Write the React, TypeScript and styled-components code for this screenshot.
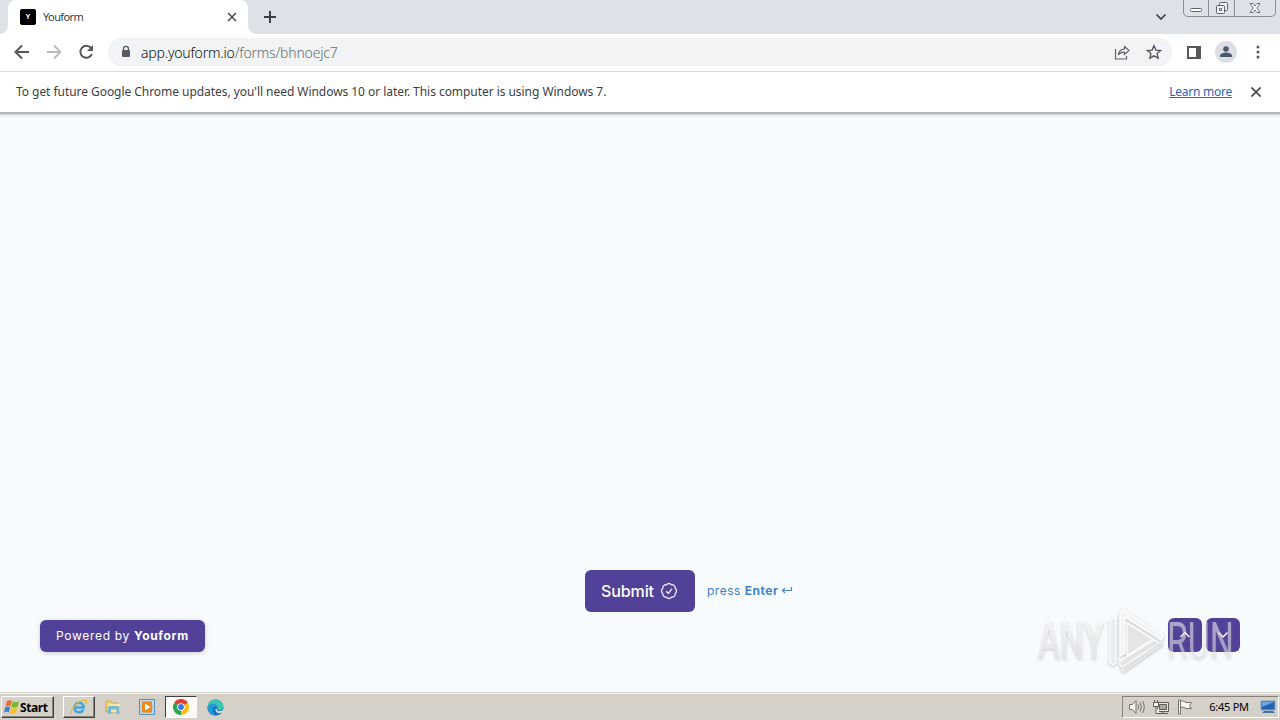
import styled, { createGlobalStyle, css } from "styled-components";

const GlobalStyle = createGlobalStyle`
  * {
    box-sizing: border-box;
  }

  body {
    margin: 0;
    overflow: hidden;
  }

  svg {
    display: block;
    flex: none;
  }
`;

const Screen = styled.div`
  position: relative;
  display: flex;
  flex-direction: column;
  width: 1280px;
  height: 720px;
  overflow: hidden;
  background: #f8fbfe;
  color: #3c4043;
  font-family: "Noto Sans", "Open Sans", sans-serif;
`;

const TabStrip = styled.header`
  display: flex;
  height: 34px;
  flex: none;
  padding-left: 8px;
  background: #dde1e8;
`;

const Tab = styled.div`
  position: relative;
  display: flex;
  align-items: center;
  width: 240px;
  padding: 0 10px 0 12px;
  border-radius: 8px 8px 0 0;
  background: #fff;

  &::before,
  &::after {
    content: "";
    position: absolute;
    bottom: 0;
    width: 8px;
    height: 8px;
  }

  &::before {
    left: -8px;
    background: radial-gradient(circle at 0 0, transparent 7.5px, #fff 8px);
  }

  &::after {
    right: -8px;
    background: radial-gradient(circle at 100% 0, transparent 7.5px, #fff 8px);
  }
`;

const Favicon = styled.span`
  width: 16px;
  height: 16px;
  border-radius: 2px;
  background: #000;
  color: #fff;
  font: bold 7px/16px Roboto, sans-serif;
  text-align: center;
`;

const TabTitle = styled.span`
  flex: 1;
  margin-left: 7px;
  padding-bottom: 2px;
  font-size: 11px;
  letter-spacing: -0.6px;
`;

const NewTab = styled.div`
  display: flex;
  align-items: center;
  margin-left: 15px;
`;

const TabSearch = styled.div`
  display: flex;
  align-items: center;
  margin-left: auto;
`;

const WindowControls = styled.div`
  display: flex;
  height: 17px;
  margin: 0 4px 0 16px;
  border: 1px solid #8b8f98;
  border-top: 0;
  border-radius: 0 0 5px 5px;
`;

const WindowButton = styled.div<{ $width: number }>`
  display: flex;
  align-items: center;
  justify-content: center;
  width: ${({ $width }) => $width}px;

  & + & {
    border-left: 1px solid #8b8f98;
  }
`;

const Toolbar = styled.nav`
  display: flex;
  align-items: center;
  height: 38px;
  flex: none;
  padding: 0 12px 1px;
  border-bottom: 1px solid #d9dbde;
  background: #fff;
`;

const NavIcons = styled.div`
  display: flex;
  gap: 12px;
`;

const AddressBar = styled.div`
  display: flex;
  align-items: center;
  width: 1064px;
  height: 28px;
  margin-left: 12px;
  padding: 0 8px;
  border-radius: 14px;
  background: #f1f3f5;
`;

const Url = styled.span`
  flex: 1;
  margin-left: 5px;
  color: #686c70;
  font-size: 14px;
  font-weight: 300;
  letter-spacing: -0.2px;
`;

const Host = styled.span`
  color: #101113;
`;

const AddressActions = styled.div`
  display: flex;
  gap: 12px;
`;

const ToolbarActions = styled.div`
  display: flex;
  align-items: center;
  gap: 11px;
  margin-left: 12px;
`;

const Avatar = styled.span`
  width: 22px;
  height: 22px;
  overflow: hidden;
  border-radius: 50%;
  background: #dcdfe4;
`;

const InfoBar = styled.section`
  position: relative;
  display: flex;
  align-items: center;
  height: 40px;
  flex: none;
  padding: 0 19px 0 16px;
  background: #fff;
  box-shadow: 0 1px 0 #b4b9bc, 0 2px 0 #b4b9bc, 0 3px 1px #d0d5d8, 0 4px 3px #e2e6e9;
  font-size: 12px;
`;

const InfoText = styled.p`
  flex: 1;
  margin: 0;
  padding-bottom: 1px;
  letter-spacing: -0.05px;
`;

const LearnMore = styled.a`
  margin-right: 19px;
  padding-bottom: 1px;
  color: #2b63b8;
  letter-spacing: -0.25px;
  text-decoration: underline;
`;

const FormPage = styled.main`
  display: flex;
  flex: 1;
  flex-direction: column;
  justify-content: flex-end;
  padding-bottom: 40px;
  font-family: Inter, sans-serif;
`;

const SubmitRow = styled.div`
  display: flex;
  align-items: center;
  gap: 12px;
  margin-bottom: 6px;
  padding-left: 585px;
`;

const SubmitButton = styled.button`
  display: flex;
  align-items: center;
  justify-content: center;
  gap: 5px;
  width: 110px;
  height: 42px;
  padding: 0;
  border: 0;
  border-radius: 6px;
  background: #524199;
  color: #fff;
  font: 500 16px Inter, sans-serif;
  letter-spacing: -0.1px;
`;

const EnterHint = styled.span`
  display: flex;
  align-items: center;
  padding-bottom: 2px;
  color: #4380cc;
  font-size: 12px;
  letter-spacing: 0.5px;
  white-space: pre;

  strong {
    margin-right: 3px;
    font-weight: 700;
  }
`;

const FormFooter = styled.footer`
  display: flex;
  align-items: flex-end;
  justify-content: space-between;
  padding: 0 40px;
`;

const PoweredBy = styled.div`
  width: 165px;
  height: 32px;
  border-radius: 6px;
  background: #524199;
  box-shadow: 0 1px 4px rgba(0, 0, 0, 0.2);
  color: #fff;
  font-size: 12px;
  letter-spacing: 0.68px;
  line-height: 32px;
  text-align: center;
`;

const StepButtons = styled.div`
  display: flex;
  gap: 4px;
`;

const StepButton = styled.button`
  display: flex;
  align-items: center;
  justify-content: center;
  width: 34px;
  height: 34px;
  padding: 0;
  border: 0;
  border-radius: 6px;
  background: #524199;
`;

const Watermark = styled.svg`
  position: absolute;
  top: 600px;
  left: 1030px;
`;

const Taskbar = styled.footer`
  display: flex;
  align-items: center;
  height: 28px;
  flex: none;
  padding: 2px 0 1px 1px;
  border-top: 1px solid #d3d2ca;
  background: #d5d0c8;
  box-shadow: inset 0 1px 0 #f9f8f5;
`;

const raised = css`
  border: 1px solid;
  border-color: #fff #404040 #404040 #fff;
  box-shadow: inset -1px -1px 0 #87837c;
`;

const sunken = css`
  border: 1px solid;
  border-color: #404040 #fff #fff #404040;
  background: #fbfaf8;
`;

const StartButton = styled.button`
  display: flex;
  align-items: center;
  gap: 0;
  width: 53px;
  height: 22px;
  margin-right: 9px;
  padding: 0 2px;
  background: #d5d0c8;
  color: #000;
  font: bold 12px "Noto Sans", sans-serif;
  letter-spacing: -0.4px;
  ${raised}
`;

const TaskButton = styled.div<{ $state?: "raised" | "sunken" }>`
  display: flex;
  align-items: center;
  justify-content: center;
  width: 32px;
  height: 22px;
  margin-right: 2px;
  ${({ $state }) => $state === "raised" && raised}
  ${({ $state }) => $state === "sunken" && sunken}
`;

const Tray = styled.div`
  display: flex;
  align-items: center;
  width: 157px;
  height: 22px;
  margin: 0 1px 0 auto;
  padding: 0 1px 0 5px;
  border: 1px solid;
  border-color: #87837c #fff #fff #87837c;
`;

const TrayIcons = styled.div`
  display: flex;
  gap: 6px;
`;

const Clock = styled.span`
  flex: 1;
  padding: 0 0 1px 5px;
  color: #000;
  font-size: 11px;
  letter-spacing: -0.25px;
  text-align: center;
`;

const CrossIcon = ({ size = 10 }: { size?: number }) => (
  <svg width={size} height={size} viewBox="0 0 10 10" stroke="#45494d" strokeWidth="1.7">
    <path d="M.5.5l9 9M9.5.5l-9 9" />
  </svg>
);

const BackIcon = () => (
  <svg width="20" height="20" viewBox="0 0 20 20" fill="none" stroke="#55585c" strokeWidth="2">
    <path d="M17 10H4M10 3.5L3.5 10l6.5 6.5" />
  </svg>
);

const ForwardIcon = () => (
  <svg width="20" height="20" viewBox="0 0 20 20" fill="none" stroke="#b8babd" strokeWidth="1.8">
    <path d="M3 10h13M10 3.5l6.5 6.5-6.5 6.5" />
  </svg>
);

const ReloadIcon = () => (
  <svg width="20" height="20" viewBox="0 0 20 20">
    <path d="M15 6a6 6 0 1 0 .9 6.2" fill="none" stroke="#55585c" strokeWidth="2" />
    <path d="M17 3v6h-6z" fill="#55585c" />
  </svg>
);

const LockIcon = () => (
  <svg width="20" height="20" viewBox="0 0 20 20">
    <path d="M7.500 9V6.800a2.500 2.500 0 0 1 5 0V9" fill="none" stroke="#55585c" strokeWidth="1.300" />
    <rect x="6" y="8" width="8" height="7" rx="1" fill="#55585c" />
  </svg>
);

const ShareIcon = () => (
  <svg width="20" height="20" viewBox="0 0 20 20" fill="none" stroke="#606468" strokeWidth="1.200">
    <path d="M3.500 7v10h11v-3" />
    <path d="M12.500 4.500l4.500 4-4.500 4v-2.300c-3 0-4.800.6-6.300 2.800.6-3.600 2.700-5.700 6.300-6.100z" />
  </svg>
);

const StarIcon = () => (
  <svg width="20" height="20" viewBox="0 0 20 20" fill="none" stroke="#55585c" strokeWidth="1.400">
    <path d="M10 3.800l1.900 4.300 4.700.4-3.500 3.100 1 4.600-4.100-2.400-4.100 2.400 1-4.600-3.500-3.100 4.700-.4z" />
  </svg>
);

const SidePanelIcon = () => (
  <svg width="20" height="20" viewBox="0 0 20 20">
    <path d="M3 4h14v13H3zM5 6v9h7V6z" fill="#55585c" fillRule="evenodd" />
  </svg>
);

const PersonIcon = () => (
  <svg width="22" height="22" viewBox="0 0 22 22" fill="#4d5871">
    <circle cx="11" cy="8" r="2.800" />
    <path d="M5 16v-1.300c0-2.200 4-3.200 6-3.200s6 1 6 3.200V16z" />
  </svg>
);

const MenuIcon = () => (
  <svg width="20" height="20" viewBox="0 0 20 20" fill="#55585c">
    <circle cx="10" cy="5" r="1.500" />
    <circle cx="10" cy="10" r="1.500" />
    <circle cx="10" cy="15" r="1.500" />
  </svg>
);

const BadgeCheckIcon = () => (
  <svg
    width="20"
    height="20"
    viewBox="0 0 24 24"
    fill="none"
    stroke="#e6e0f5"
    strokeWidth="1.700"
    strokeLinecap="round"
    strokeLinejoin="round"
  >
    <path d="M9 12.750L11.250 15 15 9.750M21 12c0 1.268-.63 2.390-1.593 3.068a3.745 3.745 0 0 1-1.043 3.296 3.745 3.745 0 0 1-3.296 1.043A3.745 3.745 0 0 1 12 21c-1.268 0-2.390-.63-3.068-1.593a3.746 3.746 0 0 1-3.296-1.043 3.745 3.745 0 0 1-1.043-3.296A3.745 3.745 0 0 1 3 12c0-1.268.63-2.390 1.593-3.068a3.745 3.745 0 0 1 1.043-3.296 3.746 3.746 0 0 1 3.296-1.043A3.746 3.746 0 0 1 12 3c1.268 0 2.390.63 3.068 1.593a3.746 3.746 0 0 1 3.296 1.043 3.746 3.746 0 0 1 1.043 3.296A3.745 3.745 0 0 1 21 12z" />
  </svg>
);

const ReturnIcon = () => (
  <svg width="12" height="10" viewBox="0 0 12 10" fill="none" stroke="#4b83c8" strokeWidth="1.100">
    <path d="M10.500 2v3.500h-9M4 3L1.500 5.500 4 8" />
  </svg>
);

const Chevron = ({ up }: { up?: boolean }) => (
  <svg width="12" height="8" viewBox="0 0 12 8" fill="none" stroke="#fff" strokeWidth="1.500">
    <path d={up ? "M1.500 6L6 1.500 10.500 6" : "M1.500 1.500L6 6l4.500-4.500"} />
  </svg>
);

const WindowsIcon = () => (
  <svg width="16" height="16" viewBox="0 0 16 16">
    <path d="M3 2c2-1.200 3.500-1 5 0L6.500 7.300c-1.600-1-3.200-1-5 0z" fill="#ed6a2d" />
    <path d="M8.800 2.500c1.700 1 3.800.9 6.200-.2L13.500 7.800c-2 .9-4.300.9-6.100 0z" fill="#77b829" />
    <path d="M1.200 8.200c1.800-1 3.400-1 5 0L4.800 13.500c-1.600-1-3-1-4.800 0z" fill="#3983cf" />
    <path d="M7.100 8.800c1.800 1 3.900.9 6.100 0l-1.500 5.200c-2 .9-4.100.9-5.900 0z" fill="#fbc023" />
  </svg>
);

const ExplorerEIcon = () => (
  <svg width="18" height="18" viewBox="0 0 18 18" fill="none">
    <path d="M4.500 9.500h9.200c0-6.500-9.200-6.500-9.200 0s7.600 5.500 8.800 2" stroke="#43a6df" strokeWidth="2.500" />
    <path d="M2 15.500C-1 12 9 2 15 2c2.500.3 1.500 3 .5 4" stroke="#e8b62e" strokeWidth="1.200" />
  </svg>
);

const FolderIcon = () => (
  <svg width="18" height="18" viewBox="0 0 18 18">
    <path d="M2 3h5l1 2h6v9H2z" fill="#efcf65" stroke="#c7a144" strokeWidth=".7" />
    <path d="M4 6h12v8H4z" fill="#f9e99b" />
    <path d="M4 16V9.500c0-1 1-1.500 2-1.500h7.500c1 0 2 .5 2 1.500V16h-3v-4.500H7V16z" fill="#76b8d8" />
  </svg>
);

const MediaIcon = () => (
  <svg width="16" height="16" viewBox="0 0 16 16">
    <path d="M.5.5h15v15H.5z" fill="#b9daf0" stroke="#4d91c5" />
    <path d="M3 2.500h10v11H3z" fill="#f18a1d" />
    <circle cx="8" cy="8" r="5.500" fill="#f18a1d" />
    <path d="M6 4.500l5.500 3.500L6 11.500z" fill="#fff" />
  </svg>
);

const ChromeIcon = () => (
  <svg width="16" height="16" viewBox="0 0 16 16">
    <path d="M8 8L1.070 4A8 8 0 0 1 14.930 4z" fill="#df4130" />
    <path d="M8 8l6.930-4A8 8 0 0 1 8 16z" fill="#fbc116" />
    <path d="M8 8v8A8 8 0 0 1 1.070 4z" fill="#2da34c" />
    <circle cx="8" cy="8" r="3.800" fill="#fff" />
    <circle cx="8" cy="8" r="2.900" fill="#3978e4" />
  </svg>
);

const EdgeIcon = () => (
  <svg width="17" height="17" viewBox="0 0 17 17">
    <circle cx="8.500" cy="8.500" r="8" fill="#1671bd" />
    <path d="M.6 8C1-2 16.500-1.500 16.500 8c0 3-4.500 4-6.300 2.400C11.500 8 9.500 5.800 7 5.800 4 5.800 1.500 7 .6 8z" fill="#3cc7b3" />
    <path d="M.6 8c.3-2 2.900-3.500 5.600-3.300C9 4.800 10.500 6.500 10.500 8 4 6 4 13 9.500 16 4 17.500 0 13 .6 8z" fill="#2498d7" />
    <path d="M9.700 9.500c-.7 2.500 3.300 3.500 6.300 1.500l1 1.500-3 3c-4 .5-6-1-6-4 0-1 .7-2.200 1.700-2z" fill="#d5dbd8" />
    <path d="M8.200 10c0 4 4 5.500 7 3.300-2 3-5.500 3.700-7.500 2.500-1.500-1.500-1.500-5 .5-5.800z" fill="#1671bd" />
  </svg>
);

const SpeakerIcon = () => (
  <svg width="18" height="16" viewBox="0 0 18 16" fill="none" stroke="#75726d">
    <path d="M1.500 5.500h3l3.500-4v13l-3.500-4h-3z" fill="#f7f6f3" />
    <path d="M10 5.500q1.500 2.500 0 5M12 3.500q3 4.500 0 9M14.500 2q3.500 6 0 12" />
  </svg>
);

const NetworkIcon = () => (
  <svg width="18" height="16" viewBox="0 0 18 16" stroke="#5e5b57">
    <path d="M5.500 3.500h11v9h-11z" fill="#e9e7e2" />
    <path d="M7.500 5.500h7v5h-7z" fill="#aaa7a1" />
    <path d="M8 14.500h8M11 12.500v2" />
    <path d="M2.500 1v3M5.500 1v3M1.500 3.500h5v4h-5zM4 7.500v7h4" fill="#f7f6f3" />
  </svg>
);

const FlagIcon = () => (
  <svg width="18" height="16" viewBox="0 0 18 16" fill="#f7f6f3" stroke="#75726d">
    <path d="M2.500 1h2v14h-2zM4.500 2.500c3-1 4 0 5.500 1h5.500l-2 3 2 3H10c-2-1.500-3-1.500-5.500-1z" />
  </svg>
);

const DesktopIcon = () => (
  <svg width="18" height="16" viewBox="0 0 18 16">
    <path d="M2 2h14v9H2z" fill="#2463b4" stroke="#7da5cf" />
    <path d="M3 3h12L3 8z" fill="#6ca6df" />
    <path d="M5 12h9l2 2H3z" fill="#476f9d" />
  </svg>
);

const RecordingMark = () => (
  <Watermark width="240" height="88" viewBox="0 0 240 88">
    <defs>
      <linearGradient id="mark" x1="0" y1="0" x2="0" y2="1">
        <stop offset="0" stopColor="#fff" />
        <stop offset="1" stopColor="#dededf" />
      </linearGradient>
      <filter id="glow" x="-10%" y="-10%" width="120%" height="120%">
        <feDropShadow dx="0" dy="1" stdDeviation="1.800" floodColor="#777" floodOpacity=".5" />
      </filter>
    </defs>
    <g filter="url(#glow)">
      <g fill="url(#mark)" fontFamily="Roboto, sans-serif" fontSize="51" transform="translate(0 59)">
        <text x="8" textLength="66" lengthAdjust="spacingAndGlyphs" opacity=".8">
          ANY
        </text>
        <text x="137" textLength="67" lengthAdjust="spacingAndGlyphs" opacity=".5">
          RUN
        </text>
      </g>
      <g stroke="#fff" strokeWidth="1.200" strokeLinejoin="round">
        <path d="M80 20l6-3v46l-3 2-3-2z" fill="#eaebec" />
        <path d="M90 12l3-2 41 26-3 4-36-23v36l-5 3z" fill="#f3f4f5" />
        <path d="M97 23l26 16-26 17z" fill="#e8eaeb" fillOpacity=".8" />
        <path d="M90 61l34-21 5 3-37 24-2-2z" fill="#e3e4e5" />
        <path d="M92 69l39-27 2 2-40 28z" fill="#dddedf" stroke="#eceded" />
      </g>
    </g>
  </Watermark>
);

const App = () => {
  return (
    <>
      <GlobalStyle />
      <Screen>
        <TabStrip>
          <Tab>
            <Favicon>Y</Favicon>
            <TabTitle>Youform</TabTitle>
            <svg width="12" height="12" viewBox="0 0 12 12" stroke="#45494d" strokeWidth="1.500">
              <path d="M2 2l8 8M10 2l-8 8" />
            </svg>
          </Tab>
          <NewTab>
            <svg width="14" height="14" viewBox="0 0 14 14" stroke="#3c4043" strokeWidth="2">
              <path d="M7 1v12M1 7h12" />
            </svg>
          </NewTab>
          <TabSearch>
            <svg width="12" height="8" viewBox="0 0 12 8" fill="none" stroke="#3c4043" strokeWidth="1.700">
              <path d="M1.500 1.500L6 6l4.500-4.500" />
            </svg>
          </TabSearch>
          <WindowControls>
            <WindowButton $width={24}>
              <svg width="14" height="17" viewBox="0 0 14 17">
                <rect x="1.500" y="8.500" width="11" height="3" rx="1" fill="#fff" stroke="#5e6269" />
              </svg>
            </WindowButton>
            <WindowButton $width={26}>
              <svg width="14" height="17" viewBox="0 0 14 17" fill="#eff1f5" stroke="#5e6269">
                <rect x="4.500" y="2.500" width="8" height="8" rx="1" />
                <rect x="1.500" y="5.500" width="8" height="8" rx="1" />
                <path d="M4.500 8.500h2v2h-2z" />
              </svg>
            </WindowButton>
            <WindowButton $width={41}>
              <svg width="14" height="17" viewBox="0 0 14 17" fill="#fff" stroke="#5e6269" strokeWidth=".9">
                <path d="M2 3.500h3l2 2.500 2-2.500h3L8.800 8l3.200 4.500H9L7 10l-2 2.500H2L5.200 8z" />
              </svg>
            </WindowButton>
          </WindowControls>
        </TabStrip>
        <Toolbar>
          <NavIcons>
            <BackIcon />
            <ForwardIcon />
            <ReloadIcon />
          </NavIcons>
          <AddressBar>
            <LockIcon />
            <Url>
              <Host>app.youform.io</Host>/forms/bhnoejc7
            </Url>
            <AddressActions>
              <ShareIcon />
              <StarIcon />
            </AddressActions>
          </AddressBar>
          <ToolbarActions>
            <SidePanelIcon />
            <Avatar>
              <PersonIcon />
            </Avatar>
            <MenuIcon />
          </ToolbarActions>
        </Toolbar>
        <InfoBar>
          <InfoText>
            To get future Google Chrome updates, you'll need Windows 10 or later. This computer is using Windows 7.
          </InfoText>
          <LearnMore>Learn more</LearnMore>
          <CrossIcon />
        </InfoBar>
        <FormPage>
          <SubmitRow>
            <SubmitButton>
              Submit
              <BadgeCheckIcon />
            </SubmitButton>
            <EnterHint>
              press <strong>Enter</strong>
              <ReturnIcon />
            </EnterHint>
          </SubmitRow>
          <FormFooter>
            <PoweredBy>
              Powered by <strong>Youform</strong>
            </PoweredBy>
            <StepButtons>
              <StepButton>
                <Chevron up />
              </StepButton>
              <StepButton>
                <Chevron />
              </StepButton>
            </StepButtons>
          </FormFooter>
        </FormPage>
        <Taskbar>
          <StartButton>
            <WindowsIcon />
            Start
          </StartButton>
          <TaskButton $state="raised">
            <ExplorerEIcon />
          </TaskButton>
          <TaskButton>
            <FolderIcon />
          </TaskButton>
          <TaskButton>
            <MediaIcon />
          </TaskButton>
          <TaskButton $state="sunken">
            <ChromeIcon />
          </TaskButton>
          <TaskButton>
            <EdgeIcon />
          </TaskButton>
          <Tray>
            <TrayIcons>
              <SpeakerIcon />
              <NetworkIcon />
              <FlagIcon />
            </TrayIcons>
            <Clock>6:45 PM</Clock>
            <DesktopIcon />
          </Tray>
        </Taskbar>
        <RecordingMark />
      </Screen>
    </>
  );
};

export default App;
